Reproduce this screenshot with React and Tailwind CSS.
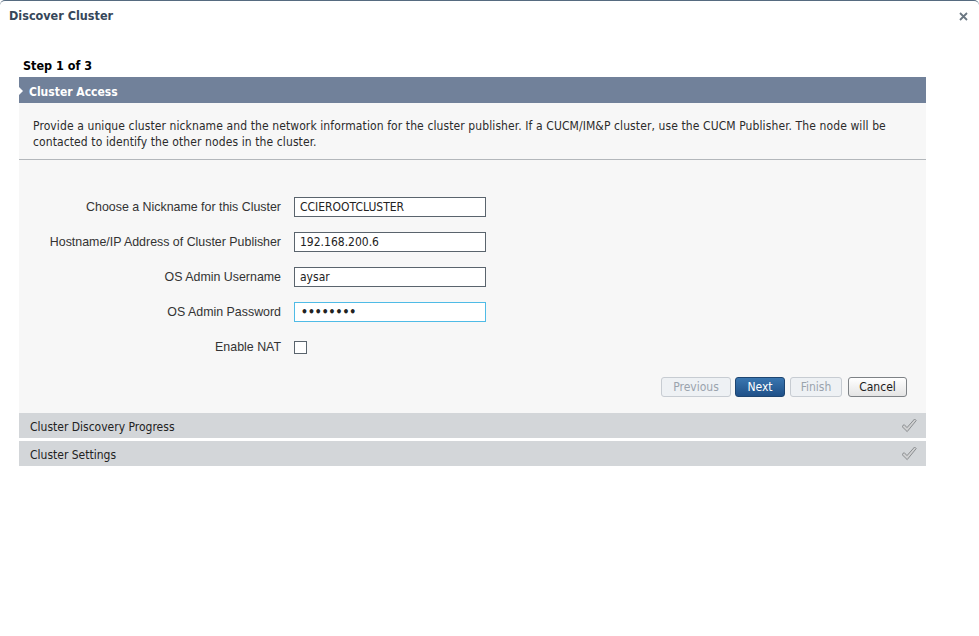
import React from 'react';

const tahoma = { fontFamily: '"DejaVu Sans Condensed", "DejaVu Sans", sans-serif' };
const arial = { fontFamily: '"Liberation Sans", Arial, sans-serif' };

const CheckIcon = () => (
  <svg width="16" height="15" viewBox="0 0 16 15">
    <path
      d="M1 8.5 L3.2 6.6 L6 9.6 L13.6 1 L15.2 2.6 L6.2 13.6 Z"
      fill="#cfd0d1"
      stroke="#8b8e91"
      strokeWidth="1"
      strokeLinejoin="round"
    />
  </svg>
);

const fields = [
  { label: 'Choose a Nickname for this Cluster', value: 'CCIEROOTCLUSTER' },
  { label: 'Hostname/IP Address of Cluster Publisher', value: '192.168.200.6' },
  { label: 'OS Admin Username', value: 'aysar' },
];

const App = () => {
  return (
    <div className="w-[979px] h-[636px] bg-white overflow-hidden border-t border-[#566b80] rounded-t-[5px]">
      {/* title bar */}
      <div className="h-[30px] flex items-center justify-between pl-[9px] pr-[11px]">
        <span className="text-[12.5px] font-bold text-[#36475a]" style={tahoma}>Discover Cluster</span>
        <svg width="9" height="9" viewBox="0 0 9 9">
          <path d="M1 1 L8 8 M8 1 L1 8" stroke="#6b7782" strokeWidth="1.8" />
        </svg>
      </div>

      <div className="ml-[19px] w-[907px]">
        <div className="pt-[27px] pl-[4px] mb-[3px] text-[12.5px] leading-[16px] font-bold text-black" style={tahoma}>
          Step 1 of 3
        </div>

        {/* active section */}
        <div className="relative h-[26px] bg-[#71819a] flex items-center pl-[10px] pt-[3px]">
          <div className="absolute left-0 top-[10px] w-0 h-0 border-y-[4px] border-y-transparent border-l-[4px] border-l-white" />
          <span className="text-[12px] font-bold text-white" style={tahoma}>Cluster Access</span>
        </div>

        <div className="bg-[#f7f7f7] pb-[16px]">
          <div className="pt-[15px] pb-[9px] px-[14px] border-b border-[#b3b7bb] text-[12px] leading-[16px] tracking-[0.1px] text-[#2b2b2b]" style={tahoma}>
            Provide a unique cluster nickname and the network information for the cluster publisher. If a CUCM/IM&amp;P cluster, use the CUCM Publisher. The node will be contacted to identify the other nodes in the cluster.
          </div>

          <div className="pt-[37px] grid grid-cols-[262px_192px] gap-x-[13px] gap-y-[15px] items-center">
            {fields.map((f) => (
              <React.Fragment key={f.label}>
                <label className="text-right text-[12.4px] text-[#333]" style={arial}>
                  {f.label}
                </label>
                <div className="h-[20px] border border-[#5a646d] bg-white flex items-center pl-[5px] text-[12px] text-[#222]" style={tahoma}>
                  {f.value}
                </div>
              </React.Fragment>
            ))}
            <label className="text-right text-[12.4px] text-[#333]" style={arial}>
              OS Admin Password
            </label>
            <div className="h-[20px] border border-[#4fbbe6] bg-white flex items-center pl-[6px] text-[12px] font-bold text-[#222]" style={tahoma}>
              ••••••••
            </div>
            <label className="text-right text-[12.4px] text-[#333]" style={arial}>
              Enable NAT
            </label>
            <div className="h-[20px] flex items-center">
              <div className="w-[13px] h-[13px] border border-[#5a646d] bg-white" />
            </div>
          </div>

          <div className="mt-[20px] flex justify-end pr-[19px] text-[12px]" style={tahoma}>
            <button className="w-[70px] h-[20px] rounded-[3px] border border-[#c7ccd2] bg-[#eef1f4] text-[#9aa3ad]">Previous</button>
            <button className="ml-[4px] w-[50px] h-[20px] rounded-[3px] border border-[#1d4571] bg-gradient-to-b from-[#3a76b0] to-[#1f5088] text-white">Next</button>
            <button className="ml-[5px] w-[52px] h-[20px] rounded-[3px] border border-[#c7ccd2] bg-[#eef1f4] text-[#9aa3ad]">Finish</button>
            <button className="ml-[6px] w-[59px] h-[20px] rounded-[3px] border border-[#7e8286] bg-gradient-to-b from-white to-[#e4e4e4] text-[#1c1c1c]">Cancel</button>
          </div>
        </div>

        <div className="h-[25px] bg-[#d3d6d9] flex items-center justify-between pl-[11px] pr-[9px]">
          <span className="text-[12px] text-[#222] pt-[3px]" style={tahoma}>Cluster Discovery Progress</span>
          <CheckIcon />
        </div>
        <div className="h-[3px] bg-white" />
        <div className="h-[25px] bg-[#d3d6d9] flex items-center justify-between pl-[11px] pr-[9px]">
          <span className="text-[12px] text-[#222] pt-[3px]" style={tahoma}>Cluster Settings</span>
          <CheckIcon />
        </div>
      </div>
    </div>
  );
};

export default App;
